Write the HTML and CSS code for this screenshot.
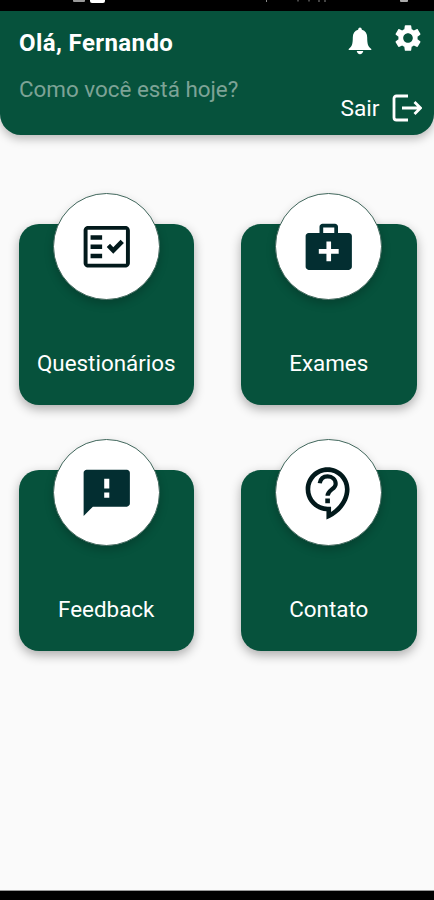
FILE: index.html
```html
<!DOCTYPE html>
<html lang="pt-BR">
<head>
<meta charset="utf-8">
<meta name="viewport" content="width=device-width, initial-scale=1">
<title>Início</title>
<link rel="stylesheet" href="styles.css">
</head>
<body>
<div class="status-bar">
  <svg class="status-icons" viewBox="0 0 434 11">
    <rect x="73" y="-2" width="12" height="4" rx="1" fill="#999"/>
    <rect x="90" y="-4" width="15" height="7" rx="2" fill="#fff"/>
    <path d="M266.500 0v2" stroke="#888"/>
    <path d="M298 0v1.500M309 0v1.500M319 0v2M325 0v2" stroke="#444" stroke-width="2"/>
    <rect x="400" y="-2" width="8" height="4" rx="1" fill="#aaa"/>
  </svg>
</div>
<header class="header">
  <div class="greeting">
    <h1 class="hello">Olá, Fernando</h1>
    <p class="question">Como você está hoje?</p>
  </div>
  <div class="actions">
    <div class="shortcuts">
      <svg class="bell" viewBox="0 0 24 28"><path d="M12 .5c1 0 1.600.8 1.900 2.300 3.500 1 5.300 3.900 5.300 7.800 0 6.200.7 9 4.100 11.500v.9H.7v-.9c3.400-2.500 4.100-5.300 4.100-11.500 0-3.900 1.800-6.800 5.300-7.800C10.400 1.300 11 .5 12 .5zM8.700 24h6.600c-.4 2-1.600 3.200-3.300 3.200S9.100 26 8.700 24z"/></svg>
      <svg class="gear" viewBox="0 0 24 24"><path d="M19.140 12.940c.04-.3.060-.61.060-.94 0-.32-.02-.64-.07-.94l2.030-1.580c.18-.14.23-.41.120-.61l-1.920-3.320c-.12-.22-.37-.29-.59-.22l-2.390.96c-.5-.38-1.030-.7-1.620-.94l-.36-2.540c-.04-.24-.24-.41-.48-.41h-3.840c-.24 0-.43.17-.47.41l-.36 2.540c-.59.24-1.130.57-1.620.94l-2.390-.96c-.22-.08-.47 0-.59.22L2.740 8.870c-.12.21-.08.47.120.61l2.030 1.580c-.05.3-.09.63-.09.94s.02.64.070.94l-2.030 1.580c-.18.14-.23.41-.12.61l1.920 3.320c.12.22.37.29.59.22l2.390-.96c.5.38 1.030.7 1.620.94l.36 2.540c.05.24.24.41.48.41h3.840c.24 0 .44-.17.47-.41l.36-2.540c.59-.24 1.130-.56 1.620-.94l2.390.96c.22.080.47 0 .59-.22l1.920-3.320c.12-.22.070-.47-.12-.61l-2.010-1.580zM12 15.600c-1.980 0-3.600-1.620-3.600-3.600s1.620-3.600 3.600-3.600 3.600 1.620 3.600 3.600-1.620 3.600-3.600 3.600z"/></svg>
    </div>
    <div class="logout">
      <span>Sair</span>
      <svg class="exit" viewBox="0 0 30 28"><path d="M16 2H4.500Q2 2 2 4.500v19Q2 26 4.500 26H16M10 14h18M22.500 8l6 6-6 6"/></svg>
    </div>
  </div>
</header>
<main class="grid">
  <section class="card">
    <div class="disc"><svg viewBox="0 0 24 24"><path fill-rule="evenodd" d="M20 3H4c-1.100 0-2 .9-2 2v14c0 1.100.9 2 2 2h16c1.100 0 2-.9 2-2V5c0-1.100-.9-2-2-2zm.300 16.300H3.700V4.700h16.600v14.600z"/><path d="M19.410 10.420L17.990 9l-3.170 3.170-1.410-1.420L12 12.160 14.820 15zM5 7h5v2H5zM5 11h5v2H5zM5 15h5v2H5z"/></svg></div>
    <h2 class="label">Questionários</h2>
  </section>
  <section class="card">
    <div class="disc"><svg viewBox="0 0 24 24"><path class="inner" d="M20.700 6H16V3.300c0-.7-.6-1.300-1.300-1.300H9.300C8.600 2 8 2.600 8 3.300V6H3.300C2.600 6 2 6.600 2 7.300v13.400c0 .7.6 1.300 1.300 1.300h17.400c.7 0 1.300-.6 1.300-1.300V7.300c0-.7-.6-1.300-1.300-1.300zM9.600 3.700h4.800V6H9.600V3.700zm6.700 11.300H13v3.300h-2V15H7.700v-2H11V9.700h2V13h3.300v2z"/></svg></div>
    <h2 class="label">Exames</h2>
  </section>
  <section class="card">
    <div class="disc"><svg viewBox="0 0 24 24"><path class="inner" d="M20.700 2H3.300C2.600 2 2 2.600 2 3.300V22l4-4h14.700c.7 0 1.300-.6 1.300-1.300V3.300c0-.7-.6-1.300-1.300-1.300zm-7.600 12.200h-2.200v-2.300h2.200v2.300zm0-4h-2.200V5.900h2.200v4.300z"/></svg></div>
    <h2 class="label">Feedback</h2>
  </section>
  <section class="card">
    <div class="disc"><svg viewBox="0 0 24 24"><path d="M11 23.590v-3.600c-5.010-.26-9-4.420-9-9.490C2 5.260 6.260 1 11.500 1S21 5.260 21 10.500c0 4.950-3.440 9.930-8.570 12.400l-1.430.69zM11.500 3C7.360 3 4 6.360 4 10.500S7.360 18 11.500 18H13v2.300c3.640-2.300 6-6.080 6-9.800C19 6.360 15.640 3 11.500 3zm-1 11.500h2v2h-2z"/><path class="hook" d="M8.100 7.900C8.400 6 9.600 4.900 11.500 4.900c2 0 3.500 1.300 3.500 3.300 0 2.300-3.500 2.500-3.500 5.100"/></svg></div>
    <h2 class="label">Contato</h2>
  </section>
</main>
<div class="nav-bar"></div>
</body>
</html>
```

FILE: styles.css
```css
* { box-sizing: border-box; }
body {
  margin: 0;
  height: 900px;
  display: flex;
  flex-direction: column;
  overflow: hidden;
  background: #fafafa;
  color: #fff;
  font-family: Roboto, sans-serif;
}
h1, h2, p { margin: 0; }
svg { display: block; fill: currentColor; }

.status-bar { height: 11px; background: #000; flex: none; }
.status-icons { width: 434px; height: 11px; }

.header {
  height: 124px;
  flex: none;
  display: flex;
  justify-content: space-between;
  padding: 0 12px 0 19px;
  background: #06523c;
  border-radius: 0 0 21px 21px;
  box-shadow: 0 4px 10px rgba(0, 0, 0, .26);
}
.greeting { padding-top: 18px; }
.hello { font-size: 24px; line-height: 28px; font-weight: 700; letter-spacing: .4px; white-space: nowrap; }
.question { margin-top: 18px; font-size: 22.400px; line-height: 28px; color: #7da396; white-space: nowrap; }
.actions { display: flex; flex-direction: column; align-items: flex-end; }
.shortcuts { display: flex; gap: 19.500px; padding-top: 11px; }
.bell { width: 24px; height: 28px; margin-top: 5px; }
.gear { width: 32px; height: 32px; margin-right: -1.500px; }
.logout { display: flex; align-items: center; gap: 12.500px; margin-top: 38.500px; font-size: 22.700px; line-height: 28px; }
.logout span { padding-top: 1px; }
.exit { width: 30px; height: 28px; fill: none; stroke: #fff; stroke-width: 2.800; }

.grid {
  flex: 1;
  display: grid;
  grid-template-columns: 175.500px 175.500px;
  grid-auto-rows: 181px;
  gap: 64.500px 47px;
  align-content: start;
  padding: 89px 0 0 18.500px;
}
.card {
  display: flex;
  flex-direction: column;
  align-items: center;
  background: #06523c;
  border-radius: 20px;
  box-shadow: 0 4px 11px rgba(0, 0, 0, .32);
}
.disc {
  width: 107px;
  height: 107px;
  margin-top: -30.700px;
  flex: none;
  display: grid;
  place-items: center;
  background: #fff;
  color: #02191b;
  border: 1px solid #41675c;
  border-radius: 50%;
  box-shadow: 0 4px 10px rgba(0, 0, 0, .2);
}
.disc svg { width: 55.500px; height: 55.500px; }
.inner { fill: #032e31; }
.hook { fill: none; stroke: currentColor; stroke-width: 1.800; }
.label { margin-top: 49px; font-size: 22.400px; line-height: 28px; font-weight: 400; }

.nav-bar { height: 9px; flex: none; background: #000; box-shadow: 0 -1px 0 #999; }
```
